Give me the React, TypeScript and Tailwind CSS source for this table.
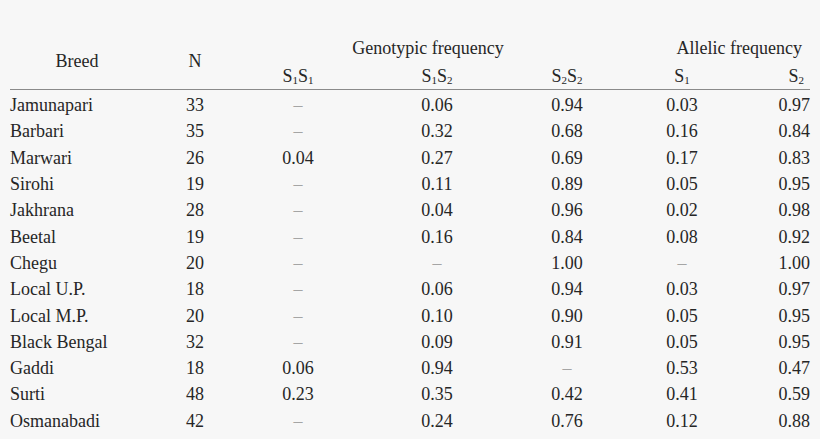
const rows: [string, string, string, string, string, string, string][] = [
  ["Jamunapari", "33", "–", "0.06", "0.94", "0.03", "0.97"],
  ["Barbari", "35", "–", "0.32", "0.68", "0.16", "0.84"],
  ["Marwari", "26", "0.04", "0.27", "0.69", "0.17", "0.83"],
  ["Sirohi", "19", "–", "0.11", "0.89", "0.05", "0.95"],
  ["Jakhrana", "28", "–", "0.04", "0.96", "0.02", "0.98"],
  ["Beetal", "19", "–", "0.16", "0.84", "0.08", "0.92"],
  ["Chegu", "20", "–", "–", "1.00", "–", "1.00"],
  ["Local U.P.", "18", "–", "0.06", "0.94", "0.03", "0.97"],
  ["Local M.P.", "20", "–", "0.10", "0.90", "0.05", "0.95"],
  ["Black Bengal", "32", "–", "0.09", "0.91", "0.05", "0.95"],
  ["Gaddi", "18", "0.06", "0.94", "–", "0.53", "0.47"],
  ["Surti", "48", "0.23", "0.35", "0.42", "0.41", "0.59"],
  ["Osmanabadi", "42", "–", "0.24", "0.76", "0.12", "0.88"],
];

// subscript digit for S1 / S2 labels
const Sub = ({ n }: { n: string }) => (
  <sub className="text-[11px]">{n}</sub>
);

const Val = ({ v }: { v: string }) =>
  v === "–" ? <span className="text-[#a5a5a5]">–</span> : <>{v}</>;

export default function App() {
  return (
    <div className="w-[820px] h-[439px] bg-[#f7f7f7] text-[#262626] text-[18px] font-['Liberation_Serif','Times_New_Roman',serif] overflow-hidden">
      <div className="pt-[33px] px-[10px]">
        <table className="table-fixed w-[800px] border-collapse">
          <colgroup>
            <col className="w-[134px]" />
            <col className="w-[102px]" />
            <col className="w-[104px]" />
            <col className="w-[174px]" />
            <col className="w-[86px]" />
            <col className="w-[144px]" />
            <col className="w-[56px]" />
          </colgroup>
          <thead>
            <tr className="h-[30px] leading-none">
              <th rowSpan={2} className="font-normal text-center align-middle border-b-[1.5px] border-[#8a8a8a]">
                Breed
              </th>
              <th rowSpan={2} className="font-normal text-center align-middle border-b-[1.5px] border-[#8a8a8a]">
                N
              </th>
              <th colSpan={3} className="font-normal text-center align-middle">
                Genotypic frequency
              </th>
              <th colSpan={2} className="font-normal text-right align-middle pr-[8px]">
                Allelic frequency
              </th>
            </tr>
            <tr className="h-[26px] leading-none border-b-[1.5px] border-[#8a8a8a]">
              <th className="font-normal text-center align-bottom pb-[4px]">
                S<Sub n="1" />S<Sub n="1" />
              </th>
              <th className="font-normal text-center align-bottom pb-[4px]">
                S<Sub n="1" />S<Sub n="2" />
              </th>
              <th className="font-normal text-center align-bottom pb-[4px]">
                S<Sub n="2" />S<Sub n="2" />
              </th>
              <th className="font-normal text-center align-bottom pb-[4px]">
                S<Sub n="1" />
              </th>
              <th className="font-normal text-right align-bottom pb-[4px] pr-[6px]">
                S<Sub n="2" />
              </th>
            </tr>
          </thead>
          <tbody>
            <tr className="h-[3px]">
              <td colSpan={7} />
            </tr>
            {rows.map((r) => (
              <tr key={r[0]} className="h-[26.3px] leading-none">
                <td className="text-left">{r[0]}</td>
                <td className="text-center">{r[1]}</td>
                <td className="text-center"><Val v={r[2]} /></td>
                <td className="text-center"><Val v={r[3]} /></td>
                <td className="text-center"><Val v={r[4]} /></td>
                <td className="text-center"><Val v={r[5]} /></td>
                <td className="text-right"><Val v={r[6]} /></td>
              </tr>
            ))}
          </tbody>
        </table>
      </div>
    </div>
  );
}
